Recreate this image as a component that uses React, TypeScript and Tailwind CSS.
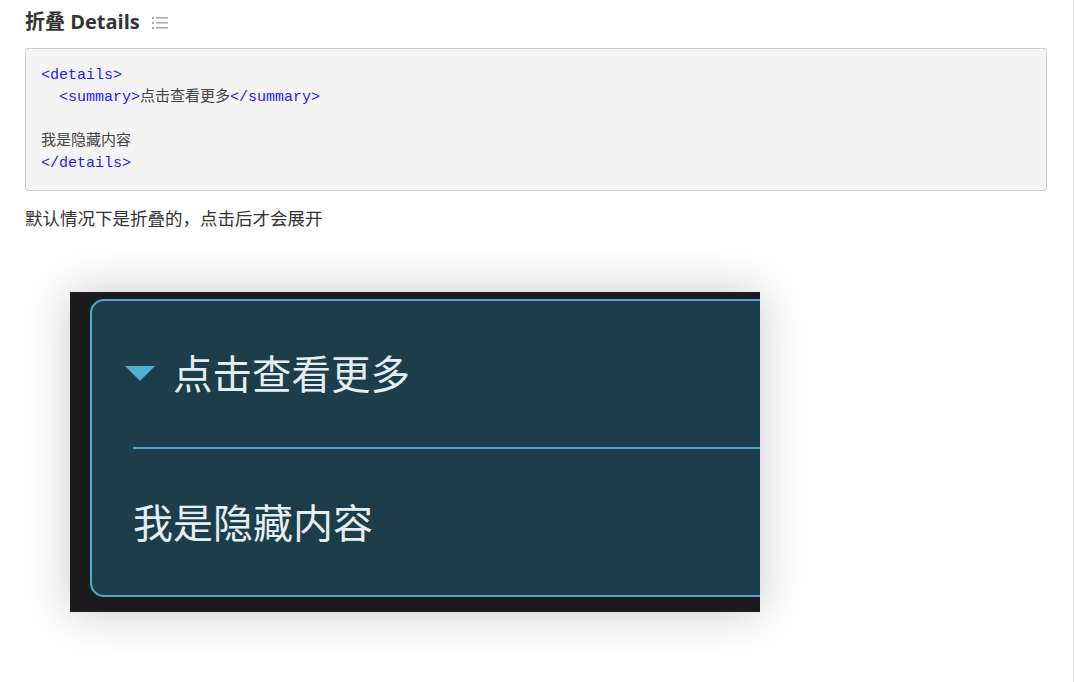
import React from 'react';

const cjk = "font-['Liberation_Sans','Noto_Sans_CJK_SC',sans-serif]";

function Tag({ children }: { children: React.ReactNode }) {
  return <span className="text-[#1a1aff]">{children}</span>;
}

function ListIcon() {
  return (
    <svg width="16" height="14" viewBox="0 0 16 14" className="text-[#aaaaaa] mt-[2px]" fill="currentColor">
      <rect x="0" y="1" width="2" height="2" />
      <rect x="4" y="1" width="12" height="1.5" />
      <rect x="0" y="6" width="2" height="2" />
      <rect x="4" y="6" width="12" height="1.5" />
      <rect x="0" y="11" width="2" height="2" />
      <rect x="4" y="11" width="12" height="1.5" />
    </svg>
  );
}

export default function App() {
  return (
    <div className={`w-[1074px] h-[682px] overflow-hidden bg-white border-r border-[#d9d9d9] text-[#333333] ${cjk}`}>
      <div className="pl-[25px] pr-[26px] pt-[8px]">
        <div className="flex items-center gap-3 h-[28px]">
          <h2 className="text-[20px] font-bold leading-[28px] font-['Open_Sans','Noto_Sans_CJK_SC',sans-serif]">折叠 Details</h2>
          <ListIcon />
        </div>

        <pre className="mt-[12px] h-[143px] px-[15px] pt-[16px] border border-[#cccccc] rounded-[3px] bg-[#f4f4f4] text-[#444444] text-[15px] leading-[22px] font-['Liberation_Mono','Noto_Sans_CJK_SC',monospace]">
          <Tag>&lt;details&gt;</Tag>
          {'\n  '}
          <Tag>&lt;summary&gt;</Tag>点击查看更多<Tag>&lt;/summary&gt;</Tag>
          {'\n\n'}
          我是隐藏内容
          {'\n'}
          <Tag>&lt;/details&gt;</Tag>
        </pre>

        <p className="mt-[16px] text-[17.5px] leading-[24px]">默认情况下是折叠的，点击后才会展开</p>

        <div className="mt-[61px] ml-[45px] w-[690px] h-[320px] bg-[#1b1b1d] shadow-[0_0_45px_rgba(0,0,0,0.22)] overflow-hidden pt-[7px] pl-[20px]">
          <div className="w-[690px] h-[298px] bg-[#1e3d4a] border-2 border-[#4fabc9] rounded-[14px] text-[#e3eff3] text-[40px]">
            <div className="flex items-center h-[146px] ml-[33px] gap-[18px]">
              <svg width="30" height="15" viewBox="0 0 30 15" className="mt-[-1px]">
                <polygon points="0,0 30,0 15,15" fill="#4cb2d4" />
              </svg>
              <span className="leading-[48px] mt-[2px] text-[39.5px]">点击查看更多</span>
            </div>
            <div className="ml-[41px] h-[2px] bg-[#4fabc9]" />
            <div className="ml-[41px] mt-[51px] leading-[48px]">我是隐藏内容</div>
          </div>
        </div>
      </div>
    </div>
  );
}
